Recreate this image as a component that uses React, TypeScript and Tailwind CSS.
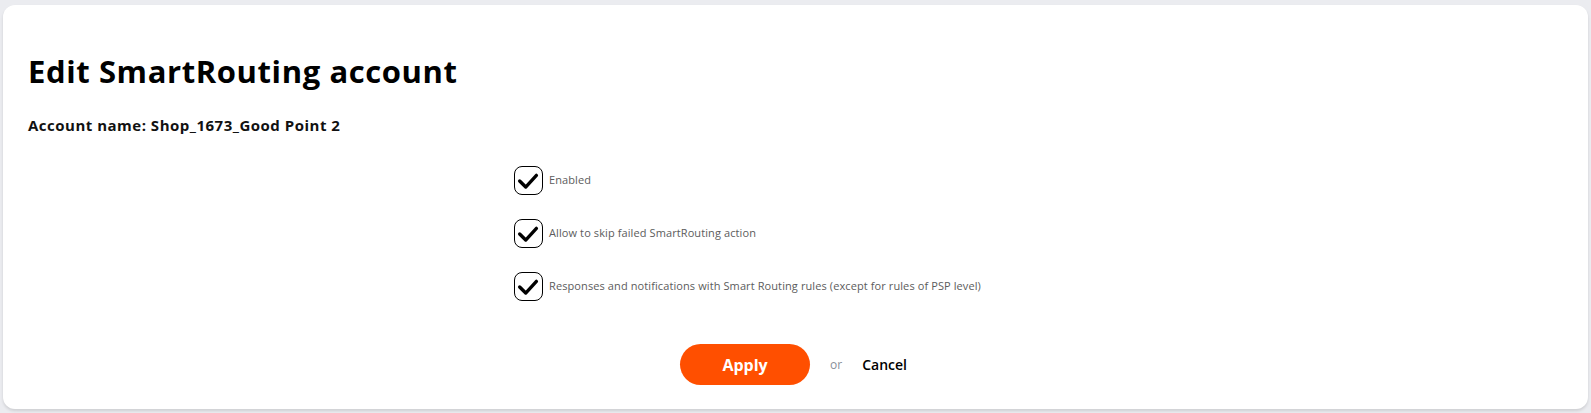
const options = [
  'Enabled',
  'Allow to skip failed SmartRouting action',
  'Responses and notifications with Smart Routing rules (except for rules of PSP level)',
];

function CheckBox() {
  return (
    <span className="flex h-[29px] w-[29px] shrink-0 items-center justify-center rounded-[8px] border border-black bg-white">
      <svg width="29" height="29" viewBox="0 0 29 29" fill="none">
        <path d="M5 15L11.5 21.5L23 9" stroke="#000" strokeWidth="3.6" strokeLinecap="round" strokeLinejoin="round" />
      </svg>
    </span>
  );
}

export default function App() {
  return (
    <div className="min-h-[413px] bg-[#ebecf0] px-[3px] pt-[5px] pb-[4px]" style={{ fontFamily: '"Open Sans", "Noto Sans", sans-serif' }}>
      <div className="rounded-[12px] bg-white px-[25px] pt-[46px] pb-[24px] shadow-[0_2px_3px_rgba(0,0,0,0.12)]">
        <h1 className="text-[31px] leading-[40px] font-bold tracking-[0.6px] text-black">Edit SmartRouting account</h1>
        <p className="mt-[24px] text-[15px] leading-[20px] font-bold tracking-[0.5px] text-[#111]">Account name: Shop_1673_Good Point 2</p>

        <div className="mt-[31px] ml-[486px] flex flex-col gap-[24px]">
          {options.map((label) => (
            <label key={label} className="flex items-center gap-[6px]">
              <CheckBox />
              <span className="text-[11px] tracking-[0.1px] text-[#5c5c5c]">{label}</span>
            </label>
          ))}
        </div>

        <div className="mt-[43px] flex items-center justify-center gap-[20px] pr-[4px]">
          <button className="h-[41px] w-[130px] rounded-full bg-[#ff4f00] text-[16px] font-bold text-white">Apply</button>
          <span className="text-[12px] text-[#8a8f99]">or</span>
          <button className="text-[14px] font-semibold text-black">Cancel</button>
        </div>
      </div>
    </div>
  );
}
